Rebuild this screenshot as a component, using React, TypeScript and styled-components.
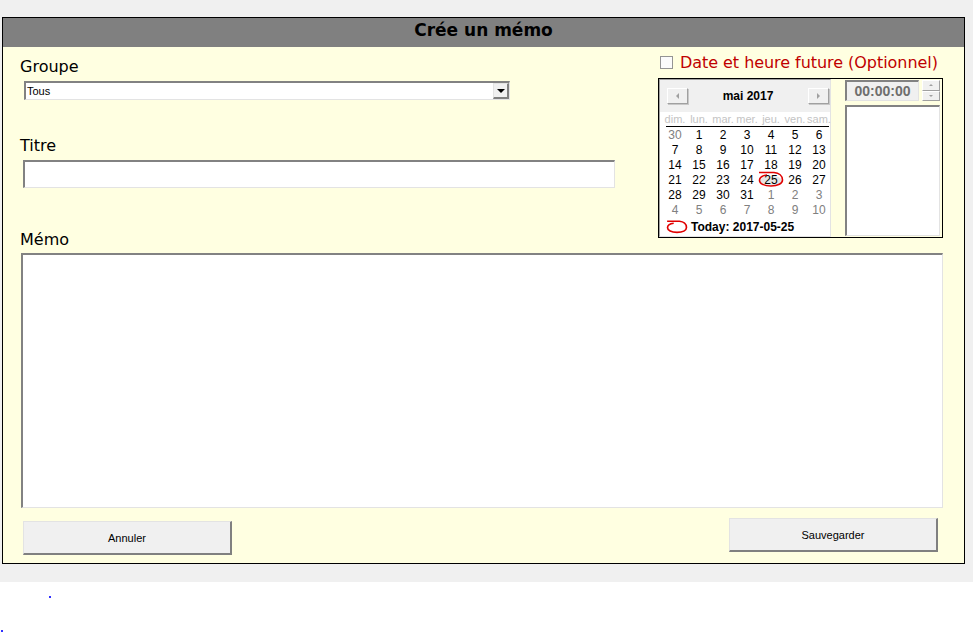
import React from 'react';
import styled, { createGlobalStyle } from 'styled-components';

const GlobalStyle = createGlobalStyle`
  html, body {
    margin: 0;
    padding: 0;
    background: #fff;
  }
  body {
    font-family: 'DejaVu Sans', sans-serif;
  }
  * {
    box-sizing: border-box;
  }
`;

const Shell = styled.div`
  background: #f0f0f0;
  padding: 17px 0 18px 2px;
`;

const Panel = styled.section`
  width: 963px;
  height: 547px;
  border: 1px solid #000;
  background: #ffffe1;
  display: flex;
  flex-direction: column;
`;

const Header = styled.h1`
  margin: 0;
  height: 29px;
  background: #808080;
  color: #000;
  font: bold 17px/24px 'DejaVu Sans', sans-serif;
  text-align: center;
`;

const Body = styled.div`
  padding: 0 21px 0 17px;
  display: flex;
  flex-direction: column;
`;

const TopRow = styled.div`
  display: flex;
  justify-content: space-between;
  align-items: flex-start;
`;

const LeftCol = styled.div`
  display: flex;
  flex-direction: column;
  align-items: flex-start;
  padding-top: 10px;
`;

const Label = styled.label<{ $gap?: number }>`
  display: block;
  margin-top: ${(p) => p.$gap ?? 0}px;
  font: 16px/19px 'DejaVu Sans', sans-serif;
  color: #000;
`;

const sunken = `
  border-style: solid;
  border-width: 2px 1px 1px 2px;
  border-color: #828282 #e3e3e3 #e3e3e3 #828282;
`;

const raised = `
  border-style: solid;
  border-width: 1px 2px 2px 1px;
  border-color: #e3e3e3 #808080 #808080 #e3e3e3;
`;

const Select = styled.div`
  margin: 5px 0 0 4px;
  width: 486px;
  height: 19px;
  ${sunken}
  background: #fff;
  display: flex;
  align-items: center;
  justify-content: space-between;
  font: 11px 'Liberation Sans', Arial, sans-serif;
  padding-left: 1px;
`;

const DropButton = styled.span`
  width: 16px;
  height: 16px;
  ${raised}
  background: #f0f0f0;
  display: flex;
  align-items: center;
  justify-content: center;
`;

const TextInput = styled.input`
  margin: 5px 0 0 3px;
  width: 592px;
  height: 28px;
  ${sunken}
  background: #fff;
  outline: none;
  padding: 0 3px;
  font: 12px 'Liberation Sans', Arial, sans-serif;
`;

const MemoArea = styled.textarea`
  margin: 4px 0 0 1px;
  width: 922px;
  height: 255px;
  ${sunken}
  background: #fff;
  resize: none;
  outline: none;
  padding: 3px;
  font: 12px 'Liberation Sans', Arial, sans-serif;
`;

const RightCol = styled.div`
  width: 285px;
  padding-top: 6px;
`;

const OptionRow = styled.div`
  display: flex;
  align-items: center;
  gap: 7px;
  height: 19px;
  margin-bottom: 6px;
`;

const CheckBox = styled.span`
  margin-left: 2px;
  width: 13px;
  height: 13px;
  border: 1px solid #949494;
  background: #fbfbfb;
`;

const OptionText = styled.span`
  font: 16px/19px 'DejaVu Sans', sans-serif;
  letter-spacing: -0.05px;
  color: #c00000;
  white-space: nowrap;
`;

const Frame = styled.div`
  width: 285px;
  height: 160px;
  border: 1px solid #000;
  padding: 0 2px 0 0;
  display: flex;
  gap: 14px;
`;

const Calendar = styled.div`
  width: 172px;
  border: 1px solid;
  border-color: #a0a0a0 #e3e3e3 #e3e3e3 #a0a0a0;
  background: #fff;
  display: flex;
  flex-direction: column;
  font-family: 'Liberation Sans', Arial, sans-serif;
`;

const CalHeader = styled.div`
  height: 32px;
  background: #f0f0f0;
  display: flex;
  align-items: center;
  justify-content: space-between;
  padding: 0 1px 0 7px;
`;

const NavButton = styled.span`
  width: 21px;
  height: 16px;
  border: 1px solid;
  border-color: #fff #a0a0a0 #a0a0a0 #fff;
  box-shadow: 1px 1px 0 #c8c8c8;
  background: #f0f0f0;
  display: flex;
  align-items: center;
  justify-content: center;
`;

const MonthTitle = styled.span`
  font: bold 12px 'Liberation Sans', Arial, sans-serif;
  color: #000;
`;

const Week = styled.div<{ $height: number }>`
  display: grid;
  grid-template-columns: repeat(7, 24px);
  padding-left: 3px;
  height: ${(p) => p.$height}px;
`;

const DayName = styled.span`
  text-align: center;
  font-size: 11px;
  line-height: 14px;
  color: #c4c4c4;
`;

const Rule = styled.div`
  height: 1px;
  background: #000;
  margin: 0 1px 1px 6px;
`;

const Day = styled.span<{ $muted?: boolean }>`
  position: relative;
  text-align: center;
  font-size: 12px;
  line-height: 15px;
  color: ${(p) => (p.$muted ? '#808080' : '#000')};
`;

const DayNum = styled.span`
  position: relative;
`;

const TodayMark = styled.svg`
  position: absolute;
  left: -1px;
  top: -2px;
`;

const TodayRow = styled.div`
  display: flex;
  align-items: center;
  gap: 3px;
  padding: 0 0 0 6px;
  height: 18px;
  font: bold 12px 'Liberation Sans', Arial, sans-serif;
  color: #000;
`;

const TimeCol = styled.div`
  width: 95px;
  padding-top: 1px;
  display: flex;
  flex-direction: column;
  gap: 4px;
`;

const TimeRow = styled.div`
  display: flex;
  gap: 3px;
  height: 21px;
`;

const TimeBox = styled.div`
  width: 74px;
  ${sunken}
  background: #f0f0f0;
  font: bold 14px/18px 'Liberation Sans', Arial, sans-serif;
  color: #6e6e6e;
  text-align: center;
`;

const Spinner = styled.div`
  width: 18px;
  display: flex;
  flex-direction: column;
`;

const SpinButton = styled.span`
  flex: 1;
  border: 1px solid;
  border-color: #fff #a0a0a0 #a0a0a0 #fff;
  background: #f0f0f0;
  display: flex;
  align-items: center;
  justify-content: center;
`;

const ListBox = styled.div`
  height: 131px;
  ${sunken}
  background: #fff;
`;

const ButtonRow = styled.div`
  margin: 10px 5px 0 3px;
  display: flex;
  justify-content: space-between;
  align-items: flex-start;
`;

const Button = styled.button<{ $offset?: number }>`
  margin-top: ${(p) => p.$offset ?? 0}px;
  width: 209px;
  height: 34px;
  ${raised}
  background: #f0f0f0;
  font: 11px 'Liberation Sans', Arial, sans-serif;
  color: #000;
  padding: 0;
`;

const Footer = styled.div`
  height: 50px;
  position: relative;
`;

const Dot = styled.span<{ $x: number; $y: number }>`
  position: absolute;
  left: ${(p) => p.$x}px;
  top: ${(p) => p.$y}px;
  width: 2px;
  height: 2px;
  background: #3030ff;
`;

const dayNames = ['dim.', 'lun.', 'mar.', 'mer.', 'jeu.', 'ven.', 'sam.'];

type Cell = { n: number; muted?: boolean; today?: boolean };

const weeks: Cell[][] = [
  [{ n: 30, muted: true }, { n: 1 }, { n: 2 }, { n: 3 }, { n: 4 }, { n: 5 }, { n: 6 }],
  [7, 8, 9, 10, 11, 12, 13].map((n) => ({ n })),
  [14, 15, 16, 17, 18, 19, 20].map((n) => ({ n })),
  [{ n: 21 }, { n: 22 }, { n: 23 }, { n: 24 }, { n: 25, today: true }, { n: 26 }, { n: 27 }],
  [{ n: 28 }, { n: 29 }, { n: 30 }, { n: 31 }, { n: 1, muted: true }, { n: 2, muted: true }, { n: 3, muted: true }],
  [4, 5, 6, 7, 8, 9, 10].map((n) => ({ n, muted: true })),
];

const circlePath =
  'M1 1.5 H16 C21 2 24.5 5 24.5 9 C24.5 12.5 20 15 13 15 C6 15 1.5 12.5 1.5 9.5 C1.5 6.5 4 4.5 9 4';

function Arrow({ dir, size = 3, color = '#000' }: { dir: 'up' | 'down' | 'left' | 'right'; size?: number; color?: string }) {
  const s = size;
  const pts = {
    down: `0,0 ${s * 2},0 ${s},${s}`,
    up: `0,${s} ${s * 2},${s} ${s},0`,
    left: `${s},0 ${s},${s * 2} 0,${s}`,
    right: `0,0 0,${s * 2} ${s},${s}`,
  }[dir];
  const w = dir === 'up' || dir === 'down' ? s * 2 : s;
  const h = dir === 'up' || dir === 'down' ? s : s * 2;
  return (
    <svg width={w} height={h} viewBox={`0 0 ${w} ${h}`}>
      <polygon points={pts} fill={color} />
    </svg>
  );
}

function App() {
  return (
    <>
      <GlobalStyle />
      <Shell>
        <Panel>
          <Header>Crée un mémo</Header>
          <Body>
            <TopRow>
              <LeftCol>
                <Label>Groupe</Label>
                <Select>
                  <span>Tous</span>
                  <DropButton>
                    <Arrow dir="down" size={4} />
                  </DropButton>
                </Select>
                <Label $gap={36}>Titre</Label>
                <TextInput defaultValue="" />
                <Label $gap={42}>Mémo</Label>
              </LeftCol>
              <RightCol>
                <OptionRow>
                  <CheckBox />
                  <OptionText>Date et heure future (Optionnel)</OptionText>
                </OptionRow>
                <Frame>
                  <Calendar>
                    <CalHeader>
                      <NavButton>
                        <Arrow dir="left" size={3} color="#a0a0a0" />
                      </NavButton>
                      <MonthTitle>mai 2017</MonthTitle>
                      <NavButton>
                        <Arrow dir="right" size={3} color="#a0a0a0" />
                      </NavButton>
                    </CalHeader>
                    <Week $height={14}>
                      {dayNames.map((d) => (
                        <DayName key={d}>{d}</DayName>
                      ))}
                    </Week>
                    <Rule />
                    {weeks.map((w, i) => (
                      <Week key={i} $height={15}>
                        {w.map((c, j) => (
                          <Day key={j} $muted={c.muted}>
                            {c.today && (
                              <TodayMark width="26" height="17" viewBox="0 0 26 17">
                                <ellipse cx="13" cy="9.5" rx="10.5" ry="5" fill="#e6e6e6" />
                                <path d={circlePath} fill="none" stroke="#e00000" strokeWidth="1.6" />
                              </TodayMark>
                            )}
                            <DayNum>{c.n}</DayNum>
                          </Day>
                        ))}
                      </Week>
                    ))}
                    <TodayRow>
                      <svg width="22" height="14" viewBox="0 0 26 17">
                        <path d={circlePath} fill="none" stroke="#e00000" strokeWidth="2" />
                      </svg>
                      <span>Today: 2017-05-25</span>
                    </TodayRow>
                  </Calendar>
                  <TimeCol>
                    <TimeRow>
                      <TimeBox>00:00:00</TimeBox>
                      <Spinner>
                        <SpinButton>
                          <Arrow dir="up" size={2} color="#a0a0a0" />
                        </SpinButton>
                        <SpinButton>
                          <Arrow dir="down" size={2} color="#a0a0a0" />
                        </SpinButton>
                      </Spinner>
                    </TimeRow>
                    <ListBox />
                  </TimeCol>
                </Frame>
              </RightCol>
            </TopRow>
            <MemoArea defaultValue="" />
            <ButtonRow>
              <Button $offset={3}>Annuler</Button>
              <Button>Sauvegarder</Button>
            </ButtonRow>
          </Body>
        </Panel>
      </Shell>
      <Footer>
        <Dot $x={49} $y={14} />
        <Dot $x={1} $y={48} />
      </Footer>
    </>
  );
}

export default App;
